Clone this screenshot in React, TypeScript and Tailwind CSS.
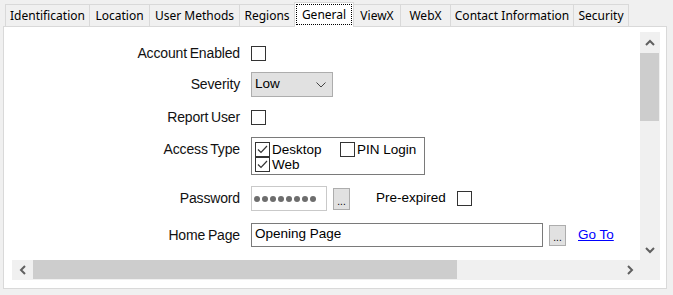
import { ReactNode } from 'react';

const tabs = [
  { label: 'Identification', w: 'w-[85px]' },
  { label: 'Location', w: 'w-[61px]' },
  { label: 'User Methods', w: 'w-[91px]' },
  { label: 'Regions', w: 'w-[56px]' },
  { label: 'General', w: 'w-[60px]', active: true },
  { label: 'ViewX', w: 'w-[48px]' },
  { label: 'WebX', w: 'w-[51px]' },
  { label: 'Contact Information', w: 'w-[124px]' },
  { label: 'Security', w: 'w-[56px]' },
];

function Chevron({ dir }: { dir: 'up' | 'down' | 'left' | 'right' }) {
  const pts = {
    up: '1,6 5,2 9,6',
    down: '1,2 5,6 9,2',
    left: '6,1 2,5 6,9',
    right: '2,1 6,5 2,9',
  }[dir];
  const vertical = dir === 'up' || dir === 'down';
  return (
    <svg width={vertical ? 10 : 8} height={vertical ? 8 : 10} viewBox={vertical ? '0 0 10 8' : '0 0 8 10'}>
      <polyline points={pts} fill="none" stroke="#606060" strokeWidth="2" />
    </svg>
  );
}

function CheckBox({ checked = false }: { checked?: boolean }) {
  return (
    <div className="w-[15px] h-[15px] border border-[#333333] bg-white flex items-center justify-center shrink-0">
      {checked && (
        <svg width="13" height="13" viewBox="0 0 13 13">
          <polyline points="2,6.5 5,9.5 11,3" fill="none" stroke="#333333" strokeWidth="1.2" />
        </svg>
      )}
    </div>
  );
}

function Label({ children }: { children: ReactNode }) {
  return (
    <div className="w-[228px] text-right text-[14px] text-[#111] tracking-[-0.15px] [word-spacing:-1px]">
      {children}
    </div>
  );
}

function SmallButton({ h }: { h: string }) {
  return (
    <div className={`w-[17px] ${h} bg-[#e1e1e1] border border-[#adadad] flex items-end justify-center pb-[2px] text-[10px] leading-none text-black`}>
      ...
    </div>
  );
}

export default function App() {
  return (
    <div
      className="w-[673px] h-[295px] bg-[#f0f0f0] overflow-hidden"
      style={{ fontFamily: '"Liberation Sans", Arial, sans-serif' }}
    >
      <div className="flex items-end h-[26px] pl-[5px]">
        {tabs.map((t, i) =>
          t.active ? (
            <div
              key={t.label}
              className={`relative z-10 -ml-px mb-[-1px] h-[25px] ${t.w} border border-b-0 border-[#d9d9d9] bg-white pt-[1px] px-[1px] pb-[2px]`}
            >
              <div
                className="w-full h-full border border-dotted border-black flex items-center justify-center text-[12px] text-black"
                style={{ fontFamily: '"Noto Sans", sans-serif' }}
              >
                {t.label}
              </div>
            </div>
          ) : (
            <div
              key={t.label}
              className={`${i === 0 ? '' : '-ml-px'} h-[22px] ${t.w} border border-b-0 border-[#d9d9d9] bg-[#f0f0f0] flex items-center justify-center text-[12px] text-black`}
              style={{ fontFamily: '"Noto Sans", sans-serif' }}
            >
              {t.label}
            </div>
          )
        )}
      </div>

      <div className="ml-[3px] w-[664px] h-[263px] border border-[#d9d9d9] bg-white">
        <div className="ml-[8px] mt-[5px] w-[648px] h-[248px] flex flex-col">
          <div className="flex h-[228px]">
            <div className="w-[628px] h-full overflow-hidden bg-white">
              <div className="flex flex-col pt-[9px]">
                <div className="flex items-center h-[24px]">
                  <Label>Account Enabled</Label>
                  <div className="ml-[11px]">
                    <CheckBox />
                  </div>
                </div>

                <div className="flex items-center h-[25px] mt-[7px]">
                  <Label>Severity</Label>
                  <div className="ml-[11px] w-[82px] h-[25px] bg-[#e1e1e1] border border-[#adadad] flex items-center justify-between pl-[3px] pr-[6px]">
                    <span className="text-[13.5px] text-black">Low</span>
                    <svg width="10" height="6" viewBox="0 0 10 6">
                      <polyline points="0.5,0.5 5,5 9.5,0.5" fill="none" stroke="#444" strokeWidth="1" />
                    </svg>
                  </div>
                </div>

                <div className="flex items-center h-[24px] mt-[8px]">
                  <Label>Report User</Label>
                  <div className="ml-[11px]">
                    <CheckBox />
                  </div>
                </div>

                <div className="flex items-start h-[38px] mt-[8px]">
                  <div className="pt-[2px]">
                    <Label>Access Type</Label>
                  </div>
                  <div className="ml-[11px] w-[174px] h-[38px] border border-[#7a7a7a] pt-[4px] pl-[3px] text-[13.5px] text-black">
                    <div className="flex items-center h-[15px]">
                      <div className="flex items-center w-[85px]">
                        <CheckBox checked />
                        <span className="ml-[2px] leading-[15px]">Desktop</span>
                      </div>
                      <CheckBox />
                      <span className="ml-[2px] leading-[15px]">PIN Login</span>
                    </div>
                    <div className="flex items-center h-[15px]">
                      <CheckBox checked />
                      <span className="ml-[2px] leading-[15px]">Web</span>
                    </div>
                  </div>
                </div>

                <div className="flex items-center h-[25px] mt-[11px]">
                  <Label>Password</Label>
                  <div className="ml-[11px] w-[76px] h-[25px] border border-[#c9c9c9] flex items-center gap-[2px] pl-[2px] pt-[1px]">
                    {Array.from({ length: 8 }).map((_, i) => (
                      <span key={i} className="w-[6px] h-[6px] rounded-full bg-[#6d6d6d]" />
                    ))}
                  </div>
                  <div className="ml-[6px]">
                    <SmallButton h="h-[22px]" />
                  </div>
                  <span className="ml-[26px] text-[13.5px] text-black">Pre-expired</span>
                  <div className="ml-[11px]">
                    <CheckBox />
                  </div>
                </div>

                <div className="flex items-center h-[24px] mt-[12px]">
                  <Label>Home Page</Label>
                  <div className="ml-[11px] w-[292px] h-[24px] border border-[#7a7a7a] pl-[3px] pt-[1px] text-[13.5px] text-black leading-[18px]">
                    Opening Page
                  </div>
                  <div className="ml-[6px]">
                    <SmallButton h="h-[21px]" />
                  </div>
                  <span className="ml-[12px] text-[13.5px] text-[#0000ff] underline">Go To</span>
                </div>
              </div>
            </div>

            <div className="w-[20px] h-full bg-[#f0f0f0] flex flex-col">
              <div className="h-[21px] flex items-center justify-center">
                <Chevron dir="up" />
              </div>
              <div className="h-[68px] w-[19px] bg-[#cdcdcd]" />
              <div className="flex-1" />
              <div className="h-[21px] flex items-center justify-center">
                <Chevron dir="down" />
              </div>
            </div>
          </div>

          <div className="flex h-[20px]">
            <div className="w-[628px] h-full bg-[#f0f0f0] flex">
              <div className="w-[21px] h-full flex items-center justify-center">
                <Chevron dir="left" />
              </div>
              <div className="w-[424px] h-[19px] bg-[#cdcdcd]" />
              <div className="flex-1" />
              <div className="w-[21px] h-full flex items-center justify-center">
                <Chevron dir="right" />
              </div>
            </div>
            <div className="w-[20px] h-full bg-[#f0f0f0]" />
          </div>
        </div>
      </div>
    </div>
  );
}
